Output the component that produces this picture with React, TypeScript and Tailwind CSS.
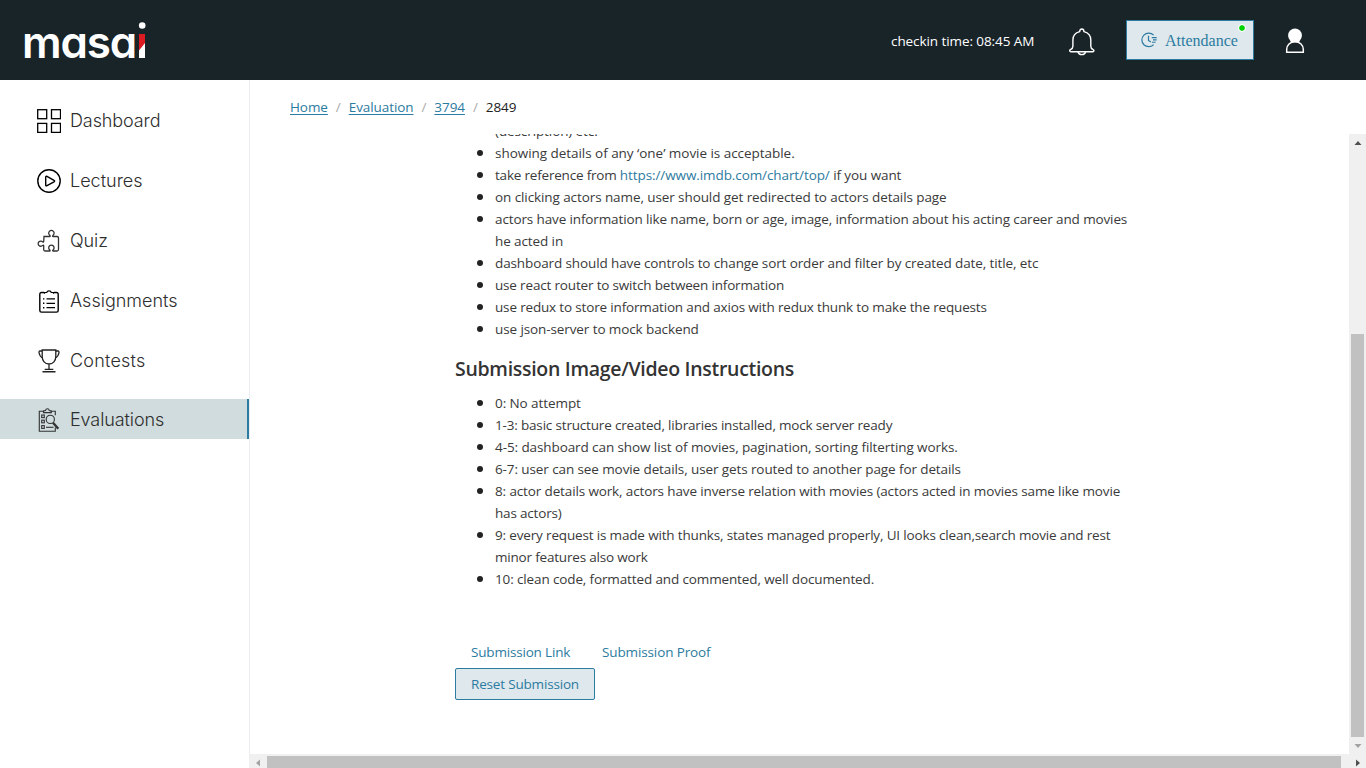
import type { ReactNode } from "react";

function Logo() {
  return (
    <a className="flex h-20 items-start" aria-label="masai">
      <span className="mt-[2px] w-[116px] whitespace-nowrap text-[44px] leading-[80px] font-semibold tracking-[-1.2px] text-white font-['Inter',sans-serif] [font-feature-settings:'cv11']">
        masa
      </span>
      <svg className="mt-5" width="8" height="40" viewBox="0 0 8 40">
        <circle cx="4.200" cy="5.500" r="3.300" fill="#fff" />
        <rect x="1" y="14" width="6" height="24" fill="#fff" />
        <path d="M1 14h6v9L1 30.500z" fill="#db1a22" />
      </svg>
    </a>
  );
}

function BellIcon() {
  return (
    <svg width="26" height="28" viewBox="0 0 26 28" fill="none" stroke="#fff" strokeWidth="1.4" strokeLinejoin="round">
      <path d="M10.700 3.600C10.700 1.900 11.500 1 12.800 1s2.100.9 2.100 2.600c4.200 1 6.900 4.300 6.900 8.400v6.200c0 1.900.8 2.600 2.300 3.400 1.300.7 1 2.200-.3 2.200H2c-1.500 0-1.800-1.500-.5-2.200 1.600-.8 2.400-1.500 2.400-3.400V12c0-4.100 2.600-7.400 6.800-8.400z" />
      <path d="M9 24c.4 1.600 1.900 2.600 3.800 2.600s3.400-1 3.800-2.600" />
    </svg>
  );
}

function ClockIcon() {
  return (
    <svg width="16" height="16" viewBox="0 0 16 16" fill="none" stroke="currentColor" strokeWidth="1.200">
      <path d="M12.600 3.200A6.800 6.800 0 1 0 12.600 12.600" />
      <path d="M7.500 3.800v4.600l2.400 1.700" />
      <path d="M10.800 5.600h4.900M12 7.900h3.600M11 10.200h3.600" strokeWidth="1.100" />
    </svg>
  );
}

function UserIcon() {
  return (
    <svg width="20" height="26" viewBox="0 0 20 26">
      <circle cx="10" cy="7.500" r="6.900" fill="#fff" />
      <path d="M1.700 24.200v-2.900c0-4.200 3.400-7.600 8.300-7.600s8.300 3.400 8.300 7.600v2.900z" fill="#192429" stroke="#fff" strokeWidth="1.500" />
      <path d="M5 12.500h10l-1 1.800H6z" fill="#fff" />
    </svg>
  );
}

const icons: Record<string, ReactNode> = {
  Dashboard: (
    <g strokeWidth="1.300">
      <rect x=".7" y=".7" width="9" height="9" />
      <rect x="14.500" y=".7" width="9" height="9" />
      <rect x=".7" y="14.400" width="9" height="9" />
      <rect x="14.500" y="14.400" width="9" height="9" />
    </g>
  ),
  Lectures: (
    <g strokeWidth="1.400">
      <circle cx="12" cy="12" r="11.200" />
      <path d="M8.700 8.100v7.800c0 .9.600 1.200 1.300.8l7-3.800c.8-.5.800-1.200 0-1.600l-7-3.900c-.7-.4-1.300-.1-1.300.7z" />
    </g>
  ),
  Quiz: (
    <path
      strokeWidth="1.300"
      stroke="#333"
      d="M7 7.500h5.700c.6 0 .6-.6.200-1.100a2.700 2.700 0 1 1 3 0c-.5.500-.4 1.100.2 1.100H20c.9 0 1.500.6 1.500 1.500v11.500c0 .9-.6 1.500-1.500 1.500h-3.800c-.6 0-.7-.6-.2-1a2.700 2.700 0 1 0-3.200 0c.5.400.4 1-.2 1H8.200c-.9 0-1.500-.6-1.500-1.500v-3.800c0-.6-.5-.7-1-.3a2.600 2.600 0 1 1 0-3.500c.5.400 1 .3 1-.3z"
    />
  ),
  Assignments: (
    <g strokeWidth="1.400">
      <path d="M7 3.500H4.500c-1 0-1.700.7-1.700 1.700v16.200c0 1 .7 1.700 1.700 1.700h15c1 0 1.700-.7 1.700-1.700V5.200c0-1-.7-1.700-1.700-1.700H17" />
      <path d="M7.500 4.800V3.500h2.200a2.400 2.400 0 0 1 4.600 0h2.200v1.300" strokeWidth="1.200" />
      <path d="M9.500 9.900H18M9.500 14.300H18M9.500 18.700H18" strokeWidth="1.200" />
      <path d="M6 9.900h1.400M6 14.300h1.400M6 18.700h1.400" />
    </g>
  ),
  Contests: (
    <g strokeWidth="1.300" stroke="#222">
      <path d="M5.200 1h13.600v6.500c0 4.300-2.700 7.500-6.800 7.500s-6.800-3.200-6.800-7.500zM12 15v5.200" />
      <path d="M5.200 2H3C2 2 1.900 3 2.100 4c.4 2.300 1.500 4 3.500 4.900M18.800 2H21c1 0 1.100 1 .9 2-.4 2.300-1.500 4-3.500 4.900" />
      <path d="M7.700 20.400h8.600M5.500 22.700h13" strokeWidth="1.400" />
    </g>
  ),
  Evaluations: (
    <g strokeWidth="1.100" stroke="#333">
      <path d="M18.300 19.500v3.700H2.300V3.300h4.900M13.500 3.300h4.800v4" />
      <path d="M6.500 4.600V3l2-.4C8.700 1.300 9.400.7 10.400.7s1.700.6 1.900 1.900l2 .4v1.600z" />
      <rect x="4.700" y="7" width="2.600" height="2.600" />
      <rect x="4.700" y="12.200" width="2.600" height="2.600" />
      <rect x="4.700" y="17.600" width="2.600" height="2.800" />
      <circle cx="13.300" cy="11.400" r="4.100" />
      <path d="M16 14.800l5.300 6" strokeWidth="2.400" />
      <path d="M9 19.300h7.500" />
    </g>
  ),
};

function NavItem({ name, active, gap, tracking }: { name: string; active?: boolean; gap: string; tracking: string }) {
  return (
    <a className={`flex h-10 pl-[37px] ${gap} ${active ? "border-r-2 border-[#2c7ba0] bg-[#d0dcdd]" : ""}`}>
      <svg className="mt-[9px] shrink-0" width="24" height="24" viewBox="0 0 24 24" fill="none" stroke="#000">
        {icons[name]}
      </svg>
      <span className={`ml-[9px] pt-px text-[18px] leading-[39px] font-light text-[#2e2e2e] font-['Inter',sans-serif] ${tracking}`}>
        {name}
      </span>
    </a>
  );
}

function Crumb({ children }: { children: ReactNode }) {
  return <a className="text-[#2c7ba0] underline underline-offset-2">{children}</a>;
}

function Item({ lines }: { lines: [ReactNode, string][] }) {
  return (
    <li className="flex">
      <span className="mt-2 mr-3 ml-[22px] size-[6px] shrink-0 rounded-full bg-[#222]" />
      <div>
        {lines.map(([text, tracking], i) => (
          <div key={i} className={`h-[22px] whitespace-nowrap ${tracking}`}>
            {text}
          </div>
        ))}
      </div>
    </li>
  );
}

const features: [ReactNode, string][][] = [
  [["(description) etc.", "tracking-[-0.1px]"]],
  [["showing details of any ‘one’ movie is acceptable.", "tracking-[-0.04px]"]],
  [
    [
      <>
        <span className="tracking-[-0.2px]">take reference from </span>
        <a className="text-[#2c7ba0]">https://www.imdb.com/chart/top/</a> if you want
      </>,
      "tracking-[-0.09px]",
    ],
  ],
  [["on clicking actors name, user should get redirected to actors details page", "tracking-[-0.09px]"]],
  [
    ["actors have information like name, born or age, image, information about his acting career and movies", "tracking-[-0.125px]"],
    ["he acted in", "tracking-[-0.1px]"],
  ],
  [["dashboard should have controls to change sort order and filter by created date, title, etc", "tracking-[-0.115px]"]],
  [["use react router to switch between information", "tracking-[-0.17px]"]],
  [["use redux to store information and axios with redux thunk to make the requests", "tracking-[-0.165px]"]],
  [["use json-server to mock backend", "tracking-[-0.1px]"]],
];

const grading: [ReactNode, string][][] = [
  [["0: No attempt", "tracking-[-0.08px]"]],
  [["1-3: basic structure created, libraries installed, mock server ready", "tracking-[-0.175px]"]],
  [["4-5: dashboard can show list of movies, pagination, sorting filterting works.", "tracking-[-0.09px]"]],
  [["6-7: user can see movie details, user gets routed to another page for details", "tracking-[-0.1px]"]],
  [
    ["8: actor details work, actors have inverse relation with movies (actors acted in movies same like movie", "tracking-[-0.13px]"],
    ["has actors)", "tracking-[-0.18px]"],
  ],
  [
    ["9: every request is made with thunks, states managed properly, UI looks clean,search movie and rest", "tracking-[-0.16px]"],
    ["minor features also work", "tracking-[-0.19px]"],
  ],
  [["10: clean code, formatted and commented, well documented.", "tracking-[-0.13px]"]],
];

function Arrow({ rotate, color }: { rotate: string; color: string }) {
  return (
    <svg className={rotate} width="8" height="8" viewBox="0 0 8 8">
      <path d="M4 2L7.500 6h-7z" fill={color} />
    </svg>
  );
}

export default function App() {
  return (
    <div className="flex h-[768px] w-[1366px] flex-col overflow-hidden bg-white text-[13.5px] text-[#3a3a3a] font-['Open_Sans',sans-serif]">
      <header className="flex h-20 shrink-0 items-center bg-[#192429] pl-[22px]">
        <Logo />
        <span className="ml-auto w-[144px] pt-[2px] tracking-[-0.08px] whitespace-nowrap text-white">checkin time: 08:45 AM</span>
        <div className="mt-1 ml-[34px]">
          <BellIcon />
        </div>
        <button className="relative ml-[31px] flex h-10 w-32 items-center border border-[#2c7ba0] bg-[#dfe8ed] pl-[14px] text-[#2c7ba0]">
          <ClockIcon />
          <span className="mt-[2px] ml-2 text-base font-['Liberation_Serif',serif]">Attendance</span>
          <span className="absolute top-1 right-2 size-[6px] rounded-full bg-[#00d400] outline outline-white" />
        </button>
        <div className="mt-[2px] mr-[61px] ml-[31px]">
          <UserIcon />
        </div>
      </header>
      <div className="flex min-h-0 flex-1">
        <nav className="flex w-[249px] shrink-0 flex-col pt-5">
          <NavItem name="Dashboard" gap="mb-5" tracking="tracking-[-0.1px]" />
          <NavItem name="Lectures" gap="mb-5" tracking="tracking-[0px]" />
          <NavItem name="Quiz" gap="mb-5" tracking="tracking-[-0.1px]" />
          <NavItem name="Assignments" gap="mb-5" tracking="tracking-[0px]" />
          <NavItem name="Contests" gap="mb-[19px]" tracking="tracking-[0.2px]" />
          <NavItem name="Evaluations" gap="" tracking="tracking-[-0.1px]" active />
        </nav>
        <div className="flex min-w-0 flex-1 flex-col">
          <div className="flex h-[54px] shrink-0 items-center border-l border-[#ecedf3] pl-10 tracking-[-0.08px] text-[#aaa]">
            <Crumb>Home</Crumb>
            <span className="mx-2">/</span>
            <Crumb>Evaluation</Crumb>
            <span className="mx-2">/</span>
            <Crumb>3794</Crumb>
            <span className="mx-2">/</span>
            <span className="font-medium text-[#222]">2849</span>
          </div>
          <div className="flex min-h-0 flex-1">
            <main className="flex-1 overflow-hidden border-l border-[#ecedf3] pl-[205px]">
              <div className="-mt-[14px]">
                <ul className="leading-[22px]">
                  {features.map((lines, i) => (
                    <Item key={i} lines={lines} />
                  ))}
                </ul>
                <h2 className="mt-[15px] mb-[9px] text-[19.5px] leading-7 font-[550] tracking-[-0.3px] text-[#333]">
                  Submission Image/Video Instructions
                </h2>
                <ul className="leading-[22px]">
                  {grading.map((lines, i) => (
                    <Item key={i} lines={lines} />
                  ))}
                </ul>
                <div className="mt-[46px] flex h-8 items-center pl-4 text-[#2c7ba0]">
                  <a className="w-[131px] tracking-[-0.18px]">Submission Link</a>
                  <a className="tracking-[-0.12px]">Submission Proof</a>
                </div>
                <button className="flex h-8 w-[140px] items-center justify-center rounded-[2px] border border-[#2c7ba0] bg-[#dfe8ed] tracking-[-0.18px] text-[#2c7ba0]">
                  Reset Submission
                </button>
              </div>
            </main>
            <div className="flex w-[17px] shrink-0 flex-col items-center bg-[#f0f0f0]">
              <div className="flex h-[200px] pt-[5px]">
                <Arrow rotate="" color="#505050" />
              </div>
              <div className="h-[403px] w-[13px] bg-[#c1c1c1]" />
              <div className="flex flex-1 items-center">
                <Arrow rotate="rotate-180" color="#a3a3a3" />
              </div>
            </div>
          </div>
          <div className="flex h-[14px] shrink-0 items-stretch bg-[#f0f0f0] pt-[2px]">
            <div className="flex w-[18px] items-center justify-center pt-px">
              <Arrow rotate="-rotate-90" color="#a3a3a3" />
            </div>
            <div className="w-[1074px] bg-[#c1c1c1]" />
            <div className="flex flex-1 items-center justify-end pt-px pr-1">
              <Arrow rotate="rotate-90" color="#505050" />
            </div>
          </div>
        </div>
      </div>
    </div>
  );
}
